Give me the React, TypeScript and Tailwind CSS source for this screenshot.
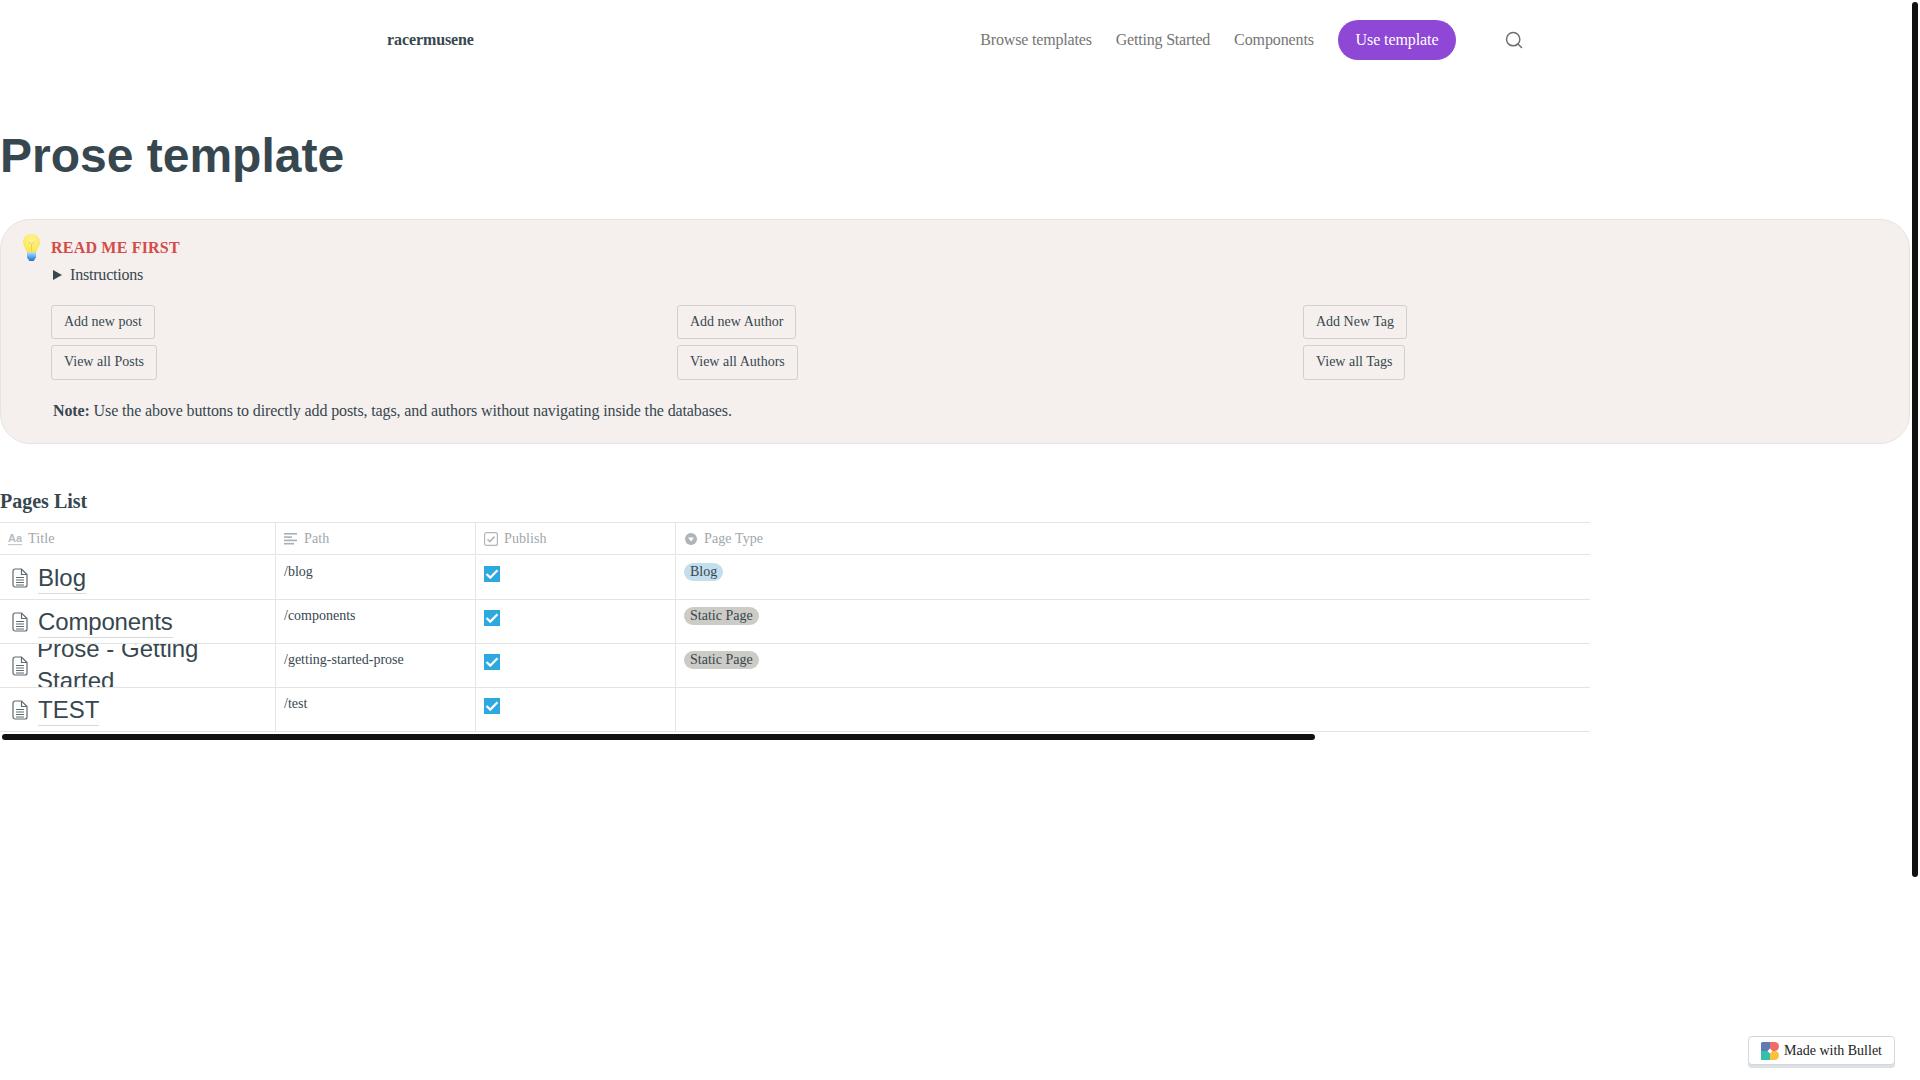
import React from "react";

const serif = "font-['Liberation_Serif',serif]";

function PageIcon() {
  return (
    <svg width="16" height="20" viewBox="0 0 16 20" fill="none" stroke="#5f6b72" strokeWidth="1.2" className="shrink-0">
      <path d="M3 1h6.5L15 6.5V17a2 2 0 0 1-2 2H3a2 2 0 0 1-2-2V3a2 2 0 0 1 2-2z" />
      <path d="M9.5 1v5.5H15" />
      <path d="M4 9.5h8M4 12h8M4 14.5h8M4 17h8" />
    </svg>
  );
}

function Check() {
  return (
    <span className="flex h-4 w-4 items-center justify-center bg-[#2ea8e0]">
      <svg width="14" height="14" viewBox="0 0 14 14" fill="none" stroke="#ffffff" strokeWidth="2.2">
        <path d="M1.5 7l3.8 3.6L12.5 3.2" />
      </svg>
    </span>
  );
}

function HeaderIcon({ kind }: { kind: string }) {
  if (kind === "title")
    return (
      <svg width="14" height="14" viewBox="0 0 14 14" className="shrink-0">
        <text x="0" y="10" fontSize="11" fontFamily="Liberation Sans" fontWeight="700" fill="#b5bbbf">Aa</text>
        <rect x="0" y="12" width="14" height="1.2" fill="#c6cacd" />
      </svg>
    );
  if (kind === "path")
    return (
      <svg width="13" height="12" viewBox="0 0 13 12" fill="#a9b0b5" className="shrink-0">
        <rect x="0" y="0" width="13" height="1.6" />
        <rect x="0" y="3.3" width="8" height="1.6" />
        <rect x="0" y="6.6" width="13" height="1.6" />
        <rect x="0" y="9.9" width="10" height="1.6" />
      </svg>
    );
  if (kind === "check")
    return (
      <svg width="14" height="14" viewBox="0 0 14 14" fill="none" className="shrink-0">
        <rect x="0.6" y="0.6" width="12.8" height="12.8" rx="2" stroke="#b0b6ba" strokeWidth="1.2" />
        <path d="M3.5 7.2l2.4 2.4 4.6-5" stroke="#b0b6ba" strokeWidth="1.6" />
      </svg>
    );
  return (
    <svg width="12" height="12" viewBox="0 0 12 12" className="shrink-0">
      <circle cx="6" cy="6" r="6" fill="#aeb4b8" />
      <path d="M3 4.6h6L6 8.6z" fill="#ffffff" />
    </svg>
  );
}

function Bulb() {
  return (
    <svg width="17" height="27" viewBox="0 0 17 27" className="shrink-0">
      <defs>
        <radialGradient id="glow" cx="50%" cy="35%" r="60%">
          <stop offset="0%" stopColor="#fff2a0" />
          <stop offset="100%" stopColor="#fbe84e" />
        </radialGradient>
        <linearGradient id="base" x1="0" y1="0" x2="0" y2="1">
          <stop offset="0%" stopColor="#bfe0f8" />
          <stop offset="55%" stopColor="#5aa5e8" />
          <stop offset="100%" stopColor="#1f6fc4" />
        </linearGradient>
      </defs>
      <path d="M8.5 0C13.2 0 17 3.5 17 8c0 3.9-2.9 6-3.4 10H3.4C2.9 14 0 11.9 0 8 0 3.5 3.8 0 8.5 0z" fill="url(#glow)" />
      <path d="M5.5 8l3 2.2 3-2.2M8.5 10.2V17" stroke="#f1cf45" strokeWidth="1" fill="none" />
      <path d="M4 18h9v5.5L10.6 27H6.4L4 23.5z" fill="url(#base)" />
    </svg>
  );
}

function Btn({ children, tall }: { children: React.ReactNode; tall?: boolean }) {
  return (
    <span
      className={`inline-block self-start whitespace-nowrap rounded-[3px] border border-[#d3cfcd] px-3 pt-[6px] text-[14px] leading-[20px] text-[#37474f] ${
        tall ? "pb-[7px]" : "pb-[6px]"
      }`}
    >
      {children}
    </span>
  );
}

function Th({ kind, label, className }: { kind: string; label: string; className: string }) {
  return (
    <div className={`flex items-center gap-[6px] border-r border-[#e4e4e4] pl-2 text-[14px] tracking-[0.1px] text-[#a0a7ac] ${className}`}>
      <HeaderIcon kind={kind} />
      <span>{label}</span>
    </div>
  );
}

const rows = [
  { title: "Blog", path: "/blog", tag: "Blog", tagBg: "bg-[#c3deed]", titleCls: "leading-[31px]" },
  { title: "Components", path: "/components", tag: "Static Page", tagBg: "bg-[#cdcbc6]", titleCls: "leading-[31px] tracking-[-0.15px]" },
  { title: "Prose - Getting Started", path: "/getting-started-prose", tag: "Static Page", tagBg: "bg-[#cdcbc6]", titleCls: "-ml-px leading-[32px]" },
  { title: "TEST", path: "/test", tag: "", tagBg: "", titleCls: "leading-[31px]" },
];

export default function App() {
  return (
    <div className={`relative h-screen overflow-hidden bg-white text-[16px] text-[#37474f] ${serif}`}>
      <header className="flex h-20 items-center pl-[387px]">
        <div className="flex w-[1139px] items-center justify-between">
          <span className="font-bold tracking-[-0.1px]">racermusene</span>
          <nav className="flex items-center gap-6 text-[#757575]">
            <span className="tracking-[-0.17px]">Browse templates</span>
            <span className="tracking-[-0.2px]">Getting Started</span>
            <span className="tracking-[-0.1px]">Components</span>
            <span className="flex h-10 w-[118px] items-center justify-center rounded-[20px] bg-[#8f47d6] tracking-[-0.1px] text-white">Use template</span>
            <svg width="20" height="20" viewBox="0 0 24 24" fill="none" stroke="#6f6f6f" strokeWidth="1.8" strokeLinecap="round" className="ml-[24px] mr-[2px]">
              <circle cx="11" cy="11" r="8" />
              <path d="M21 21l-4.3-4.3" />
            </svg>
          </nav>
        </div>
      </header>

      <h1 className="mt-[47px] font-['Liberation_Sans',sans-serif] text-[48px] font-bold leading-[58px] text-[#37474f]">Prose template</h1>

      <section className="mt-[34px] h-[225px] w-[1910px] rounded-[30px] border border-[#e6e3e1] bg-[#f5f0ee] pl-[22px] pt-[14px]">
        <div className="flex h-[26px] items-center gap-[11px]">
          <Bulb />
          <span className="mt-[2px] font-bold tracking-[0.2px] text-[#d44c47]">READ ME FIRST</span>
        </div>
        <div className="mt-[3px] flex items-center pl-[30px]">
          <span className="mr-[8px] h-0 w-0 border-y-[5px] border-l-[9px] border-y-transparent border-l-[#37474f]" />
          <span className="tracking-[-0.2px]">Instructions</span>
        </div>
        <div className="mt-[18px] grid grid-cols-[626px_626px_626px] pl-[28px]">
          <div className="flex flex-col gap-[6px]">
            <Btn>Add new post</Btn>
            <Btn tall>View all Posts</Btn>
          </div>
          <div className="flex flex-col gap-[6px]">
            <Btn>Add new Author</Btn>
            <Btn tall>View all Authors</Btn>
          </div>
          <div className="flex flex-col gap-[6px]">
            <Btn>Add New Tag</Btn>
            <Btn tall>View all Tags</Btn>
          </div>
        </div>
        <p className="mt-[19px] pl-[30px] tracking-[-0.12px]">
          <strong>Note:</strong> Use the above buttons to directly add posts, tags, and authors without navigating inside the databases.
        </p>
      </section>

      <h2 className="mt-[43px] text-[20px] font-bold leading-[28px]">Pages List</h2>

      <div className="mt-[7px] w-[1590px]">
        <div className="flex h-[33px] border-y border-[#e4e4e4]">
          <Th kind="title" label="Title" className="w-[276px]" />
          <Th kind="path" label="Path" className="w-[200px] gap-[7px]" />
          <Th kind="check" label="Publish" className="w-[200px]" />
          <div className="flex items-center gap-[7px] pl-[9px] text-[14px] tracking-[0.1px] text-[#a0a7ac]">
            <HeaderIcon kind="select" />
            <span>Page Type</span>
          </div>
        </div>
        <div className="pt-px">
          {rows.map((r) => (
            <div key={r.path} className="flex h-[44px] border-b border-[#e4e4e4]">
              <div className="flex w-[276px] items-center gap-[10px] overflow-hidden border-r border-[#e4e4e4] pl-[12px] pr-[60px] font-['Liberation_Sans',sans-serif] text-[24px]">
                <PageIcon />
                <span className={`border-b border-[#d9d9d9] ${r.titleCls}`}>{r.title}</span>
              </div>
              <div className="w-[200px] border-r border-[#e4e4e4] pl-2 pt-[6px] text-[14px] leading-[20px]">{r.path}</div>
              <div className="w-[200px] border-r border-[#e4e4e4] pl-2 pt-[10px]">
                <Check />
              </div>
              <div className="pl-2 pt-[7px]">
                {r.tag && <span className={`block rounded-[9px] px-[6px] text-[14px] leading-[18px] ${r.tagBg}`}>{r.tag}</span>}
              </div>
            </div>
          ))}
        </div>
      </div>
      <div className="ml-[2px] mt-[2px] h-[6px] w-[1313px] rounded-[3px] bg-[#111111]" />

      <div className="absolute right-[2px] top-[2px] h-[875px] w-[6px] rounded-[3px] bg-[#111111]" />

      <div className="absolute right-[25px] top-[1036px] flex h-[29px] w-[147px] items-center gap-[5px] rounded-[4px] border border-[#d0d7e0] bg-white pl-[12px] text-[14px] text-[#222222] shadow-[0_3px_0_#dde0e3]">
        <svg width="18" height="18" viewBox="0 0 18 18" className="shrink-0">
          <path d="M0 1.5A1.5 1.5 0 0 1 1.5 0H9v9H0z" fill="#5f7ab5" />
          <path d="M9 0h4.5a4.5 4.5 0 0 1 0 9H9z" fill="#f26b6b" />
          <path d="M0 9h9v9H0z" fill="#35c0aa" />
          <path d="M9 9h4.5a4.5 4.5 0 0 1 0 9H9z" fill="#fbc13a" />
          <path d="M9 6.5L11.5 9 9 11.5 6.5 9z" fill="#ffffff" />
        </svg>
        <span>Made with Bullet</span>
      </div>
    </div>
  );
}
